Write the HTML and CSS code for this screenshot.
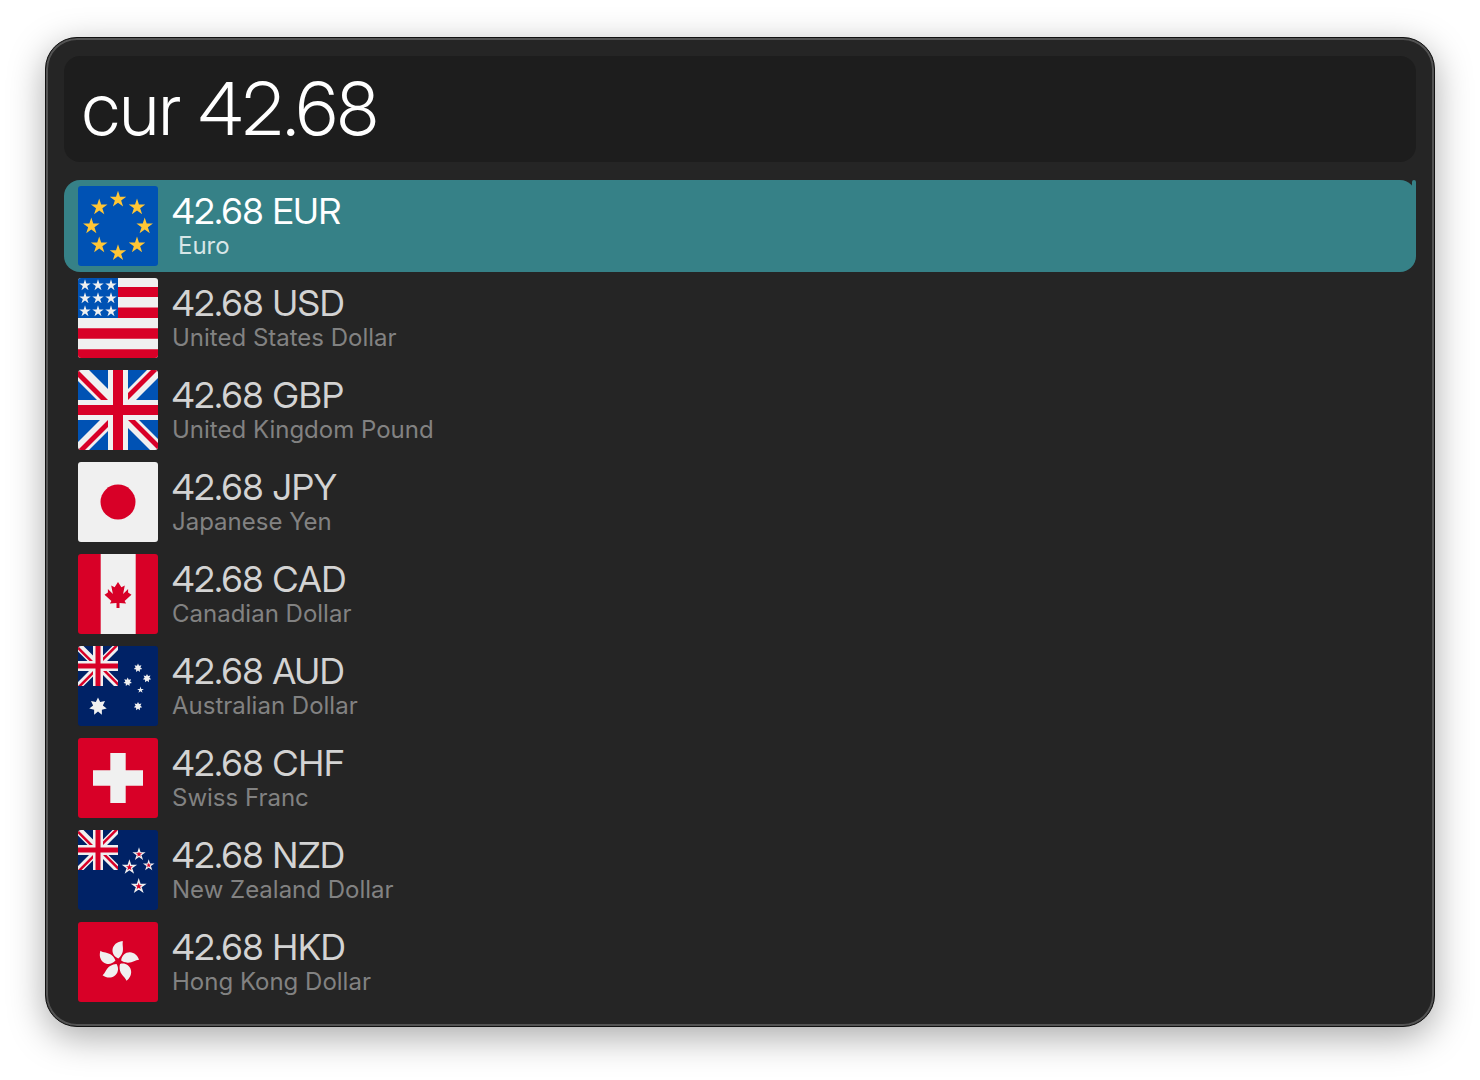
FILE: index.html
```html
<!DOCTYPE html>
<html lang="en">
<head>
<meta charset="utf-8">
<title>Currency</title>
<link rel="stylesheet" href="styles.css">
</head>
<body>
<svg class="defs" aria-hidden="true">
  <defs>
    <path id="star5" d="M0-10 2.25-3.09 9.51-3.09 3.63 1.18 5.88 8.09 0 3.82-5.88 8.09-3.63 1.18-9.51-3.09-2.25-3.09z"/>
    <path id="star7" d="M0-10 2.4-5 7.8-6.2 5.4-1.2 9.7 2.2 4.3 3.5 4.3 9 0 5.5-4.3 9-4.3 3.5-9.7 2.2-5.4-1.2-7.8-6.2-2.4-5z"/>
    <g id="union">
      <path fill="#f0f0f0" d="M0 0h80v80H0z"/>
      <path class="union-blue" d="M11 0h19v19zM0 11v19h19zM50 0h19L50 19zM80 8v22H58zM0 50h22L0 72zM30 61v19H11zM50 58v22h22zM61 50h19v19z"/>
      <path fill="#d80027" d="M35 0h10v35h35v10H45v35H35V45H0V35h35zM0 0v7l23 23h7zM50 30v-7L73 0h7zM50 50h7l23 23v7zM30 50v7L7 80H0z"/>
    </g>
  </defs>
</svg>
<main class="launcher">
  <input class="query" type="text" aria-label="Search" value="cur 42.68" spellcheck="false" autocomplete="off">
  <ul class="results">
    <li class="row selected">
      <svg class="flag" viewBox="0 0 80 80" aria-hidden="true">
        <path fill="#0052b4" d="M0 0h80v80H0z"/>
        <g fill="#ffc635">
          <use href="#star5" transform="translate(40 13.4) scale(.87)"/>
          <use href="#star5" transform="translate(59 21.2) scale(.87)"/>
          <use href="#star5" transform="translate(66.7 40.2) scale(.87)"/>
          <use href="#star5" transform="translate(59 59.2) scale(.87)"/>
          <use href="#star5" transform="translate(40 67) scale(.87)"/>
          <use href="#star5" transform="translate(21.2 59.2) scale(.87)"/>
          <use href="#star5" transform="translate(13.3 40.2) scale(.87)"/>
          <use href="#star5" transform="translate(21.2 21.2) scale(.87)"/>
        </g>
      </svg>
      <div class="text"><span class="amount">42.68 EUR</span><span class="name indent">Euro</span></div>
    </li>
    <li class="row">
      <svg class="flag" viewBox="0 0 80 80" aria-hidden="true">
        <path fill="#f0f0f0" d="M0 0h80v80H0z"/>
        <path fill="#d80027" d="M40 9h40v10H40zM40 29.5h40V40H40zM0 50.3h80v10.4H0zM0 71.2h80V80H0z"/>
        <path fill="#0052b4" d="M0 0h40v40H0z"/>
        <g fill="#f0f0f0">
          <use href="#star5" transform="translate(7 7.3) scale(.6)"/>
          <use href="#star5" transform="translate(20 7.3) scale(.6)"/>
          <use href="#star5" transform="translate(33 7.3) scale(.6)"/>
          <use href="#star5" transform="translate(7 20.3) scale(.6)"/>
          <use href="#star5" transform="translate(20 20.3) scale(.6)"/>
          <use href="#star5" transform="translate(33 20.3) scale(.6)"/>
          <use href="#star5" transform="translate(7 33.3) scale(.6)"/>
          <use href="#star5" transform="translate(20 33.3) scale(.6)"/>
          <use href="#star5" transform="translate(33 33.3) scale(.6)"/>
        </g>
      </svg>
      <div class="text"><span class="amount">42.68 USD</span><span class="name">United States Dollar</span></div>
    </li>
    <li class="row">
      <svg class="flag" viewBox="0 0 80 80" aria-hidden="true"><use href="#union"/></svg>
      <div class="text"><span class="amount">42.68 GBP</span><span class="name">United Kingdom Pound</span></div>
    </li>
    <li class="row">
      <svg class="flag" viewBox="0 0 80 80" aria-hidden="true">
        <path fill="#f0f0f0" d="M0 0h80v80H0z"/>
        <circle cx="40" cy="40" r="17.5" fill="#d80027"/>
      </svg>
      <div class="text"><span class="amount">42.68 JPY</span><span class="name">Japanese Yen</span></div>
    </li>
    <li class="row">
      <svg class="flag" viewBox="0 0 80 80" aria-hidden="true">
        <path fill="#d80027" d="M0 0h80v80H0z"/>
        <path fill="#f0f0f0" d="M22.7 0h35v80h-35z"/>
        <path fill="#d80027" d="M40 28l3.4 5.2 3.4-1.7-1.7 8.6 5-5.1v3.4l3.4 2.4-1.7 1.5-5.2 4.6 1.5 2.7-6.6-.6V54h-3v-5l-6.6.6 1.5-2.7-5.2-4.6-1.7-1.5 3.4-2.4V35l5 5.1-1.7-8.6 3.4 1.7z"/>
      </svg>
      <div class="text"><span class="amount">42.68 CAD</span><span class="name">Canadian Dollar</span></div>
    </li>
    <li class="row">
      <svg class="flag navy" viewBox="0 0 80 80" aria-hidden="true">
        <path fill="#002266" d="M0 0h80v80H0z"/>
        <use href="#union" transform="scale(.5)"/>
        <g fill="#f0f0f0">
          <use href="#star7" transform="translate(20 60.6) scale(.9)"/>
          <use href="#star7" transform="translate(60 22) scale(.44)"/>
          <use href="#star7" transform="translate(49.7 36) scale(.44)"/>
          <use href="#star7" transform="translate(69 32.3) scale(.44)"/>
          <use href="#star7" transform="translate(60 60.3) scale(.44)"/>
          <use href="#star5" transform="translate(62.5 44) scale(.35)"/>
        </g>
      </svg>
      <div class="text"><span class="amount">42.68 AUD</span><span class="name">Australian Dollar</span></div>
    </li>
    <li class="row">
      <svg class="flag" viewBox="0 0 80 80" aria-hidden="true">
        <path fill="#d80027" d="M0 0h80v80H0z"/>
        <path fill="#f0f0f0" d="M32.3 15h15.4v17.3H65v15.4H47.7V65H32.3V47.7H15V32.3h17.3z"/>
      </svg>
      <div class="text"><span class="amount">42.68 CHF</span><span class="name">Swiss Franc</span></div>
    </li>
    <li class="row">
      <svg class="flag navy" viewBox="0 0 80 80" aria-hidden="true">
        <path fill="#002266" d="M0 0h80v80H0z"/>
        <use href="#union" transform="scale(.5)"/>
        <g fill="#d80027" stroke="#f0f0f0" stroke-width="2.4">
          <use href="#star5" transform="translate(61 24.3) scale(.5)"/>
          <use href="#star5" transform="translate(51.4 37.3) scale(.58)"/>
          <use href="#star5" transform="translate(70.7 35.3) scale(.44)"/>
          <use href="#star5" transform="translate(60.7 56.3) scale(.6)"/>
        </g>
      </svg>
      <div class="text"><span class="amount">42.68 NZD</span><span class="name">New Zealand Dollar</span></div>
    </li>
    <li class="row">
      <svg class="flag" viewBox="0 0 80 80" aria-hidden="true">
        <defs><path id="petal" d="M0-3C-5-5-6.8-10-5.3-14-3.8-18 0-20.3 4.7-20.3 3.5-17 5.8-13 4-8.5 3-6 1.5-4 0-3z"/></defs>
        <path fill="#d80027" d="M0 0h80v80H0z"/>
        <g fill="#f0f0f0" transform="translate(40.3 39.5)">
          <use href="#petal"/>
          <use href="#petal" transform="rotate(72)"/>
          <use href="#petal" transform="rotate(144)"/>
          <use href="#petal" transform="rotate(216)"/>
          <use href="#petal" transform="rotate(288)"/>
        </g>
      </svg>
      <div class="text"><span class="amount">42.68 HKD</span><span class="name">Hong Kong Dollar</span></div>
    </li>
  </ul>
</main>
</body>
</html>
```
FILE: styles.css
```css
* {
  box-sizing: border-box;
}

body {
  margin: 0;
  padding: 37px 45px 53px;
  background: #fff;
  font-family: Inter, "Liberation Sans", sans-serif;
}

.defs {
  position: absolute;
  width: 0;
  height: 0;
}

.launcher {
  display: flex;
  flex-direction: column;
  gap: 18px;
  padding: 18px;
  border: 1px solid #111;
  border-radius: 32px;
  background: #252525;
  box-shadow: inset 0 0 0 2px #535353, 0 10px 36px rgba(0, 0, 0, 0.34);
}

.query,
.amount {
  font-family: "Inter Display", Inter, "Liberation Sans", sans-serif;
}

.query {
  display: block;
  width: 100%;
  height: 106px;
  padding: 0 18px;
  border: 0;
  border-radius: 16px;
  outline: 0;
  background: #1d1d1d;
  color: #fff;
  font-size: 73px;
  font-weight: 300;
  line-height: 106px;
}

.results {
  position: relative;
  margin: 0;
  padding: 0;
  list-style: none;
}

/* scroll thumb, mostly hidden behind the selected row */
.results::after {
  content: "";
  position: absolute;
  top: 0;
  right: 0;
  width: 4px;
  height: 40px;
  border-radius: 2px;
  background: #368187;
}

.row {
  display: flex;
  align-items: center;
  gap: 14px;
  height: 92px;
  padding: 0 14px;
  border-radius: 16px;
  color: #d3d3d3;
}

.selected {
  background: #368187;
  color: #fff;
}

.flag {
  flex: none;
  width: 80px;
  height: 80px;
  border-radius: 3px;
}

/* the small union canton takes the navy of its flag */
.navy {
  --union-blue: #002266;
}

.union-blue {
  fill: var(--union-blue, #0052b4);
}

.text {
  display: flex;
  flex-direction: column;
}

.amount {
  font-size: 36px;
  line-height: 40px;
}

.name {
  color: #828282;
  font-size: 24px;
  line-height: 30px;
}

.selected .name {
  color: #d7e6e7;
}

.name.indent {
  padding-left: 6px;
}
```
